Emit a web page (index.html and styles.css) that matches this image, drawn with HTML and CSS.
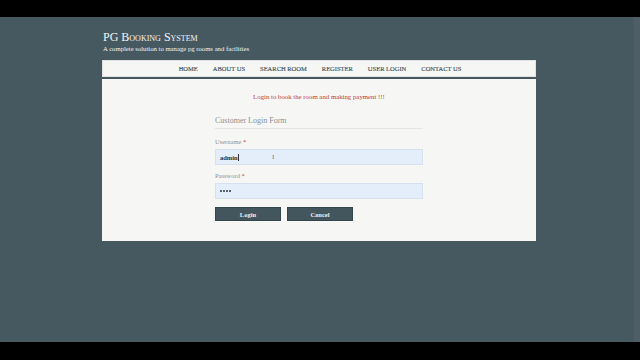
FILE: index.html
```html
<!DOCTYPE html>
<html lang="en">
<head>
    <meta charset="UTF-8">
    <meta name="viewport" content="width=device-width, initial-scale=1.0">
    <title>PG Booking System</title>
    <link rel="stylesheet" href="styles.css">
</head>
<body>
    <div class="screen">
        <div class="wrap">
            <!-- header -->
            <div class="header">
                <h1 class="title">PG Booking System</h1>
                <p class="tagline">A complete solution to manage pg rooms and facilities</p>
            </div>
            <!-- menu -->
            <div class="nav">
                <a href="#">HOME</a>
                <a href="#">ABOUT US</a>
                <a href="#">SEARCH ROOM</a>
                <a href="#">REGISTER</a>
                <a href="#">USER LOGIN</a>
                <a href="#">CONTACT US</a>
            </div>
            <!-- login box -->
            <div class="content">
                <p class="notice">Login to book the room and making payment !!!</p>
                <form class="login">
                    <div class="form-title">Customer Login Form</div>
                    <label class="lbl">Username <span class="req">*</span></label>
                    <div class="field">
                        <span class="val">admin</span><span class="caret"></span>
                        <span class="ibeam">I</span>
                    </div>
                    <label class="lbl">Password <span class="req">*</span></label>
                    <div class="field">
                        <span class="dot"></span><span class="dot"></span><span class="dot"></span><span class="dot"></span>
                    </div>
                    <div class="buttons">
                        <button type="button" class="btn">Login</button>
                        <button type="button" class="btn">Cancel</button>
                    </div>
                </form>
            </div>
        </div>
        <div class="edge"></div>
    </div>
</body>
</html>
```

FILE: styles.css
```css
body {
    margin: 0;
    padding: 0;
    background: #000;
    font-family: "Liberation Serif", "DejaVu Serif", serif;
}
.screen {
    position: relative;
    margin-top: 17px;
    height: 325px;
    background: #475960;
    overflow: hidden;
}
.edge {
    position: absolute;
    right: 0;
    top: 0;
    bottom: 0;
    width: 6px;
    background: #4f5e64;
}
.wrap {
    width: 434px;
    margin-left: 102px;
}

.header {
    padding-top: 12px;
    height: 31px;
    color: #f2f4f4;
    padding-left: 1px;
}
.title {
    margin: 0;
    font-size: 12px;
    font-weight: normal;
    font-variant: small-caps;
    line-height: 16px;
}
.tagline {
    margin: 0;
    font-size: 6.7px;
    line-height: 8px;
}

.nav {
    height: 15px;
    background: #f6f7f5;
    border: 1px solid #dfe3e2;
    display: flex;
    justify-content: center;
    align-items: center;
    gap: 15px;
    padding-left: 2px;
}
.nav a {
    color: #3f535b;
    text-decoration: none;
    font-size: 6.5px;
    line-height: 15px;
    -webkit-text-stroke: 0.15px #3f535b;
}

.content {
    margin-top: 2px;
    height: 150px;
    background: #f6f7f5;
    padding-top: 12px;
}
.notice {
    margin: 0;
    text-align: center;
    color: #c0392b;
    font-size: 6.8px;
    line-height: 12px;
}
.login {
    width: 208px;
    margin: 12px auto 0;
}
.form-title {
    color: #8a8f92;
    font-size: 8px;
    line-height: 12px;
    padding-bottom: 1px;
    border-bottom: 1px solid #e2e5e4;
}
.lbl {
    display: block;
    margin-top: 8px;
    color: #8c9094;
    font-size: 6.5px;
    line-height: 10px;
}
.lbl + .field {
    margin-top: 2px;
}
.field + .lbl {
    margin-top: 6px;
}
.req {
    color: #c0392b;
}
.field {
    position: relative;
    height: 16px;
    box-sizing: border-box;
    background: #e4eefa;
    border: 1px solid #d5e1ee;
    padding-left: 4px;
    display: flex;
    align-items: center;
    gap: 1px;
}
.val {
    font-size: 6.5px;
    font-weight: bold;
    color: #26343a;
}
.dot {
    width: 2px;
    height: 2px;
    border-radius: 50%;
    background: #26343a;
}
.caret {
    display: inline-block;
    width: 1px;
    height: 7px;
    background: #333;
    margin-left: -1px;
}
.ibeam {
    position: absolute;
    left: 56px;
    top: 3px;
    font-size: 7px;
    color: #777;
}

.buttons {
    display: flex;
    gap: 6px;
    margin-top: 8px;
}
.btn {
    width: 66px;
    height: 14px;
    padding: 0;
    background: #43555d;
    border: 1px solid #34454c;
    color: #eef1f2;
    font-family: inherit;
    font-size: 6.5px;
    font-weight: bold;
}
```
